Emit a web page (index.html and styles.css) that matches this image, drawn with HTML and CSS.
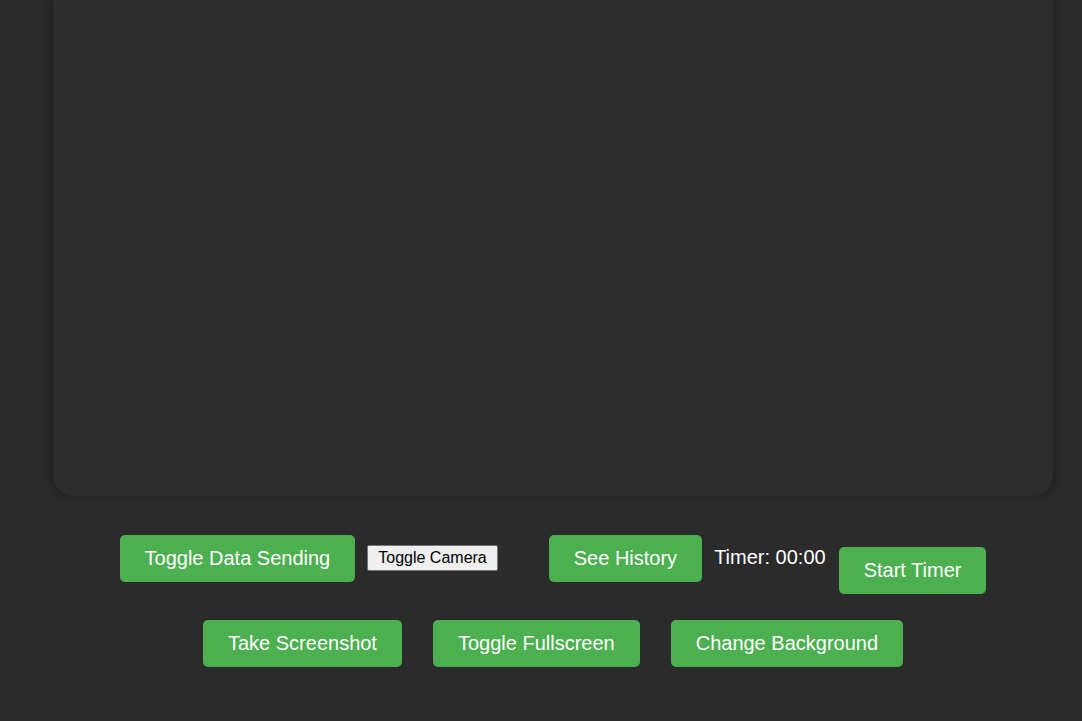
FILE: index.html
```html
<!DOCTYPE html>
<html>
<head>
<meta charset="utf-8">
<link rel="stylesheet" href="styles.css">
</head>
<body>
<main class="app">
  <div class="viewer"></div>
  <div class="row row-one">
    <button class="btn">Toggle Data Sending</button>
    <button class="plain">Toggle Camera</button>
    <button class="btn history">See History</button>
    <span class="timer">Timer: 00:00</span>
    <button class="btn start">Start Timer</button>
  </div>
  <div class="row row-two">
    <button class="btn">Take Screenshot</button>
    <button class="btn">Toggle Fullscreen</button>
    <button class="btn">Change Background</button>
  </div>
</main>
</body>
</html>
```
FILE: styles.css
```css
html, body {
  margin: 0;
  padding: 0;
  background: #2b2b2b;
  font-family: "Liberation Sans", Arial, sans-serif;
  overflow: hidden;
}
.app {
  width: 1000px;
  margin-left: 53px;
  display: flex;
  flex-direction: column;
}
.viewer {
  height: 496px;
  background: #2d2d2d;
  border-radius: 0 0 20px 20px;
  box-shadow: 0 0 10px rgba(0, 0, 0, 0.35);
}
.row {
  display: flex;
  justify-content: center;
  align-items: flex-start;
}
.row-one {
  margin-top: 39px;
}
.row-two {
  margin-top: 26px;
  gap: 31px;
}
.btn {
  background: #4caf50;
  color: #fff;
  border: none;
  border-radius: 5px;
  font-family: "Liberation Sans", Arial, sans-serif;
  font-size: 20px;
  line-height: 23px;
  padding: 12px 25px;
  height: 47px;
  margin: 0;
  cursor: pointer;
}
.plain {
  margin: 10px 0 0 12px;
  height: 26px;
  padding: 0 10px;
  font-family: "Liberation Sans", Arial, sans-serif;
  font-size: 16px;
  color: #000;
  background: #efefef;
  border: 1px solid #767676;
  border-radius: 2px;
}
.history {
  margin-left: 51px;
}
.timer {
  color: #fff;
  font-size: 20px;
  line-height: 23px;
  margin: 11px 0 0 12px;
}
.start {
  margin: 12px 0 0 13px;
}
```
